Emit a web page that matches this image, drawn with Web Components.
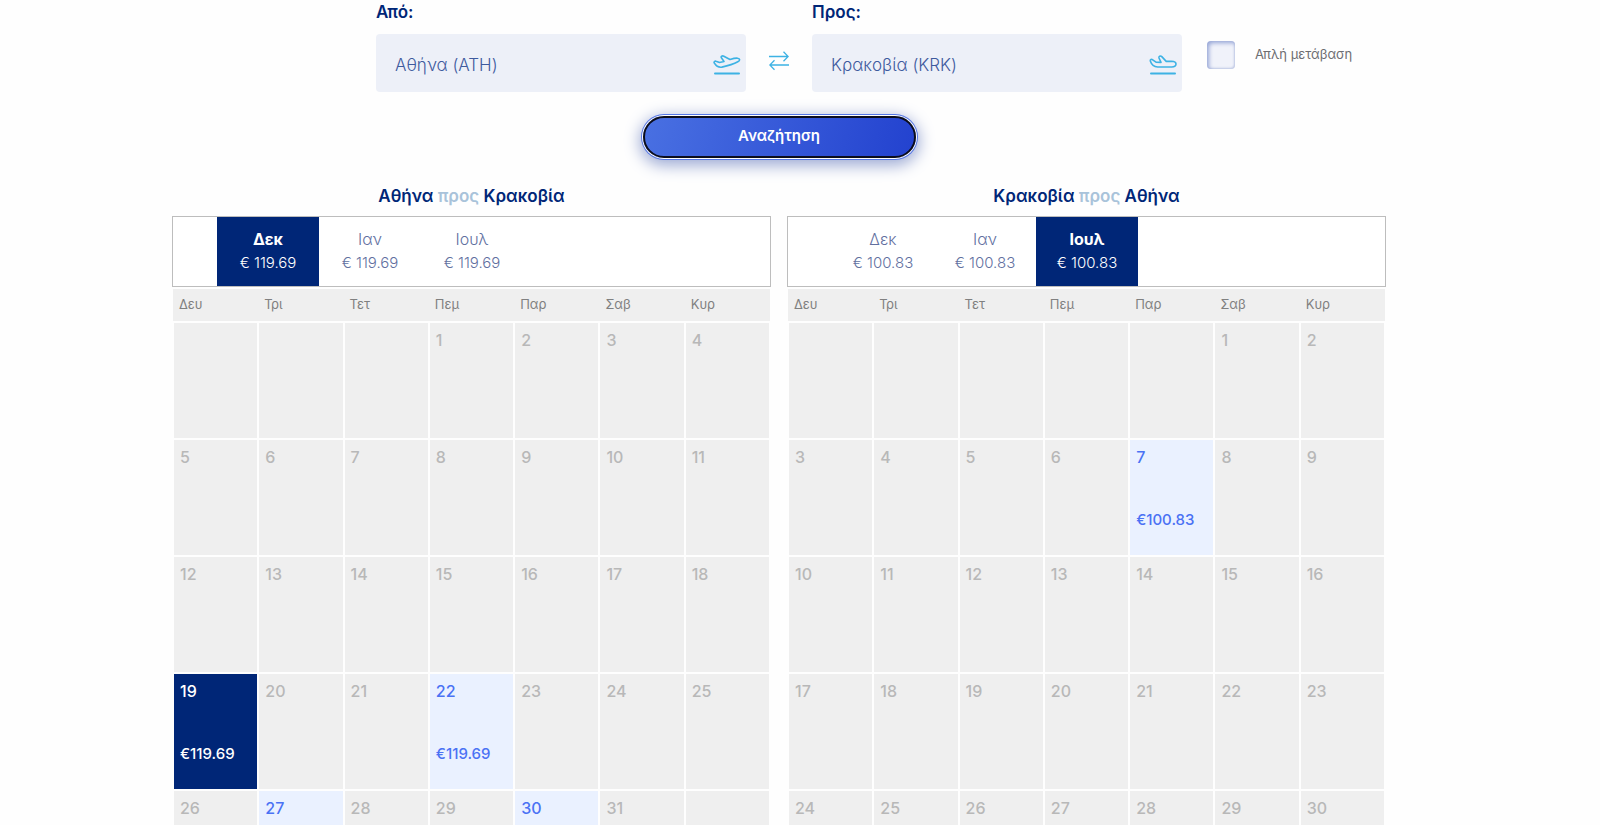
<!DOCTYPE html>
<html lang="el">
<head>
<meta charset="utf-8">
<title>Αναζήτηση πτήσεων</title>
<style>
  body {
    margin: 0;
    padding: 0 42px 0 0;
    background: #fefefe;
    color: #002677;
    font-family: Inter, "Open Sans", sans-serif;
    font-size: 16px;
  }
</style>
</head>
<body>
<fare-page></fare-page>

<template id="fare-page">
  <style>
    :host {
      display: block;
      max-width: 1214px;
      margin: 0 auto;
    }
    .calendars {
      display: flex;
      gap: 16px;
      margin-top: 26px;
    }
    fare-calendar {
      flex: 1;
      min-width: 0;
    }
  </style>
  <search-form></search-form>
  <div class="calendars">
    <fare-calendar class="outbound">Αθήνα <span slot="to">Κρακοβία</span></fare-calendar>
    <fare-calendar class="inbound">Κρακοβία <span slot="to">Αθήνα</span></fare-calendar>
  </div>
</template>

<template id="search-form">
  <style>
    :host {
      display: block;
    }
    .row {
      display: grid;
      grid-template-columns: 1fr minmax(0, 806px) 1fr;
    }
    .fields {
      grid-column: 2;
      display: flex;
    }
    airport-field {
      flex: 1;
      min-width: 0;
    }
    .swap {
      width: 66px;
      margin-top: 34px;
      padding: 0 0 4px;
      border: 0;
      background: none;
      cursor: pointer;
    }
    .swap svg {
      display: block;
      margin: auto;
    }
    .one-way {
      display: flex;
      align-items: flex-start;
      align-self: start;
      gap: 20px;
      margin: 41px 0 0 25px;
      color: #6d6d72;
      font-size: 13px;
      line-height: 26px;
      white-space: nowrap;
    }
    .one-way input {
      appearance: none;
      width: 28px;
      height: 28px;
      margin: 0;
      border-radius: 4px;
      background: #f0f2fa;
      box-shadow: inset 2px 2px 4px #95a5d6, inset -1px -1px 2px #c8d0e8;
    }
    .search {
      display: block;
      width: 273px;
      height: 42px;
      margin: 24px auto 0;
      border: 2px solid #0b0d1c;
      border-radius: 21px;
      background: linear-gradient(105deg, #4970e2, #2342cf);
      box-shadow: 0 0 0 1px #fff, 0 0 0 2px #5577e6, 0 4px 16px 3px #98a6d2;
      color: #fff;
      font: inherit;
      font-size: 15px;
      font-weight: 600;
      line-height: 20px;
      padding: 0 0 2px;
      cursor: pointer;
    }
  </style>
  <form>
    <div class="row">
      <div class="fields">
        <airport-field value="Αθήνα (ATH)" icon="takeoff">Από:</airport-field>
        <button class="swap" type="button" aria-label="Αντιστροφή">
          <svg width="20" height="20" viewBox="0 0 20 20" fill="none" stroke="#3db2e4" stroke-width="1.3">
            <path d="M0 5.5H19M14.5 .8 19.2 5.5 14.5 10.2" />
            <path d="M20 14H1M5.5 9.3.8 14l4.7 4.7" />
          </svg>
        </button>
        <airport-field value="Κρακοβία (KRK)" icon="landing">Προς:</airport-field>
      </div>
      <label class="one-way"><input type="checkbox">Απλή μετάβαση</label>
    </div>
    <button class="search" type="button">Αναζήτηση</button>
  </form>
</template>

<template id="airport-field">
  <style>
    :host {
      display: block;
    }
    label {
      display: block;
      margin-bottom: 10px;
      font-size: 17px;
      font-weight: 600;
      line-height: 24px;
    }
    .box {
      display: flex;
      align-items: center;
      height: 58px;
      border-radius: 4px;
      background: #edf0f8;
    }
    input {
      flex: 1;
      min-width: 0;
      padding: 4px 0 0 19px;
      border: 0;
      outline: 0;
      background: none;
      color: #3e5a9e;
      font: inherit;
      font-size: 17px;
      font-weight: 300;
    }
    svg {
      margin: 2px 5px 0 0;
    }
  </style>
  <label for="airport"><slot></slot></label>
  <div class="box">
    <input id="airport" type="text">
    <svg width="28" height="24" viewBox="0 0 28 24" fill="none" stroke="#3db2e4" stroke-width="1.6" stroke-linejoin="round" stroke-linecap="round">
      <path class="plane" />
      <path d="M2 21.5h24" stroke-width="2" />
    </svg>
  </div>
</template>

<template id="fare-calendar">
  <style>
    :host {
      display: block;
    }
    h2 {
      margin: 0 0 8px;
      font-size: 17px;
      font-weight: 600;
      line-height: 24px;
      text-align: center;
    }
    h2 .towards {
      color: #a9c3da;
    }
    .months {
      display: flex;
      padding-left: 44px;
      border: 1px solid #bdbdbd;
      background: #fff;
    }
    table {
      width: 100%;
      table-layout: fixed;
      border-spacing: 2px;
    }
    th {
      height: 32px;
      padding: 0 0 2px 5px;
      box-sizing: border-box;
      background: #efefef;
      box-shadow: 1px 0 #efefef, -1px 0 #efefef;
      color: #808080;
      font-size: 13px;
      font-weight: 400;
      text-align: left;
    }
    td {
      height: 115px;
      padding: 0;
      background: #efefef;
      color: #b8b8b8;
      font-size: 16px;
      font-weight: 500;
      line-height: 20px;
      vertical-align: top;
    }
    .day {
      display: flex;
      flex-direction: column;
      box-sizing: border-box;
      gap: 43px;
      width: 100%;
      height: 115px;
      padding: 7px 0 0 6px;
      border: 0;
      background: none;
      color: inherit;
      font: inherit;
      text-align: left;
    }
    button.day {
      background: #eaf1ff;
      color: #4a72f4;
      cursor: pointer;
    }
    button.day.selected {
      background: #002677;
      color: #fff;
    }
    .price {
      font-size: 15px;
    }
  </style>
  <h2><slot></slot><span class="towards">προς</span> <slot name="to"></slot></h2>
  <div class="months"></div>
  <table>
    <thead><tr></tr></thead>
    <tbody></tbody>
  </table>
</template>

<template id="month-tab">
  <style>
    :host {
      display: block;
      flex: 0 1 102px;
    }
    button {
      display: block;
      width: 100%;
      padding: 10px 0 11px;
      border: 0;
      background: none;
      color: #62709f;
      font: inherit;
      font-size: 16px;
      font-weight: 300;
      line-height: 24px;
      cursor: pointer;
    }
    .month,
    .price {
      display: block;
    }
    .price {
      font-size: 15px;
    }
    :host([selected]) button {
      background: #002677;
      color: #fff;
    }
    :host([selected]) .month {
      font-weight: 700;
    }
  </style>
  <button type="button">
    <span class="month"><slot></slot></span>
    <span class="price"></span>
  </button>
</template>

<script>
  const WEEKDAYS = ['Δευ', 'Τρι', 'Τετ', 'Πεμ', 'Παρ', 'Σαβ', 'Κυρ'];
  const MONTHS = ['Δεκ', 'Ιαν', 'Ιουλ'];
  const PLANES = {
    takeoff: 'M1.3 11C.5 9.8 2 8.800 3 9.200l3.500 1.300 4.500-1-2.600-3.700C7.400 4.400 9.300 3.500 10.800 4.200L17 7.500c3-.9 5.500-1.500 7.500-1.300 2.800.4 2.700 2.200.3 3.600-2.700 1.500-10.800 4.200-16 5.300-3.200.6-5.300-.7-7.500-4.100Z',
    landing: 'M1.300 9C.9 7.500 2.600 7 3.700 7.800L7 10.200l5 .2L10 6C9.400 4.500 11.500 3.200 12.800 4.600l4.400 4.800 5.300-.2c2.600 0 4.500 1.200 4.500 2.900S25.300 15 22.700 15H8.700C4.800 14.800 2.600 13 1.300 9Z'
  };
  const CALENDARS = {
    outbound: { offset: 3, days: 31, month: 'Δεκ', price: '119.69', fares: { 19: '€119.69', 22: '€119.69', 27: '', 30: '' }, selected: 19 },
    inbound: { offset: 5, days: 31, month: 'Ιουλ', price: '100.83', fares: { 7: '€100.83' } }
  };

  class BaseElement extends HTMLElement {
    constructor() {
      super();
      this.attachShadow({ mode: 'open' });
      const template = document.getElementById(this.localName);
      this.shadowRoot.appendChild(template.content.cloneNode(true));
    }
  }

  class AirportField extends BaseElement {
    connectedCallback() {
      this.shadowRoot.querySelector('input').value = this.getAttribute('value');
      this.shadowRoot.querySelector('.plane').setAttribute('d', PLANES[this.getAttribute('icon')]);
    }
  }

  class MonthTab extends BaseElement {
    connectedCallback() {
      this.shadowRoot.querySelector('.price').textContent = `€ ${this.getAttribute('price')}`;
    }
  }

  class FareCalendar extends BaseElement {
    connectedCallback() {
      this.data = CALENDARS[this.className];
      this.renderMonths();
      this.renderDays();
    }

    renderMonths() {
      const months = this.shadowRoot.querySelector('.months');
      months.innerHTML = MONTHS.map((name) =>
        `<month-tab price="${this.data.price}" ${name === this.data.month ? 'selected' : ''}>${name}</month-tab>`
      ).join('');
    }

    renderDays() {
      const { offset, days, fares, selected } = this.data;
      this.shadowRoot.querySelector('thead tr').innerHTML =
        WEEKDAYS.map((day) => `<th scope="col">${day}</th>`).join('');

      let rows = '';
      for (let start = 1 - offset; start <= days; start += 7) {
        rows += '<tr>';
        for (let day = start; day < start + 7; day++) {
          if (day < 1 || day > days) {
            rows += '<td></td>';
          } else if (day in fares) {
            rows += `<td><button type="button" class="day ${day === selected ? 'selected' : ''}"><span>${day}</span><span class="price">${fares[day]}</span></button></td>`;
          } else {
            rows += `<td><div class="day">${day}</div></td>`;
          }
        }
        rows += '</tr>';
      }
      this.shadowRoot.querySelector('tbody').innerHTML = rows;
    }
  }

  customElements.define('airport-field', AirportField);
  customElements.define('month-tab', MonthTab);
  customElements.define('fare-calendar', FareCalendar);
  customElements.define('search-form', class extends BaseElement {});
  customElements.define('fare-page', class extends BaseElement {});
</script>
</body>
</html>
